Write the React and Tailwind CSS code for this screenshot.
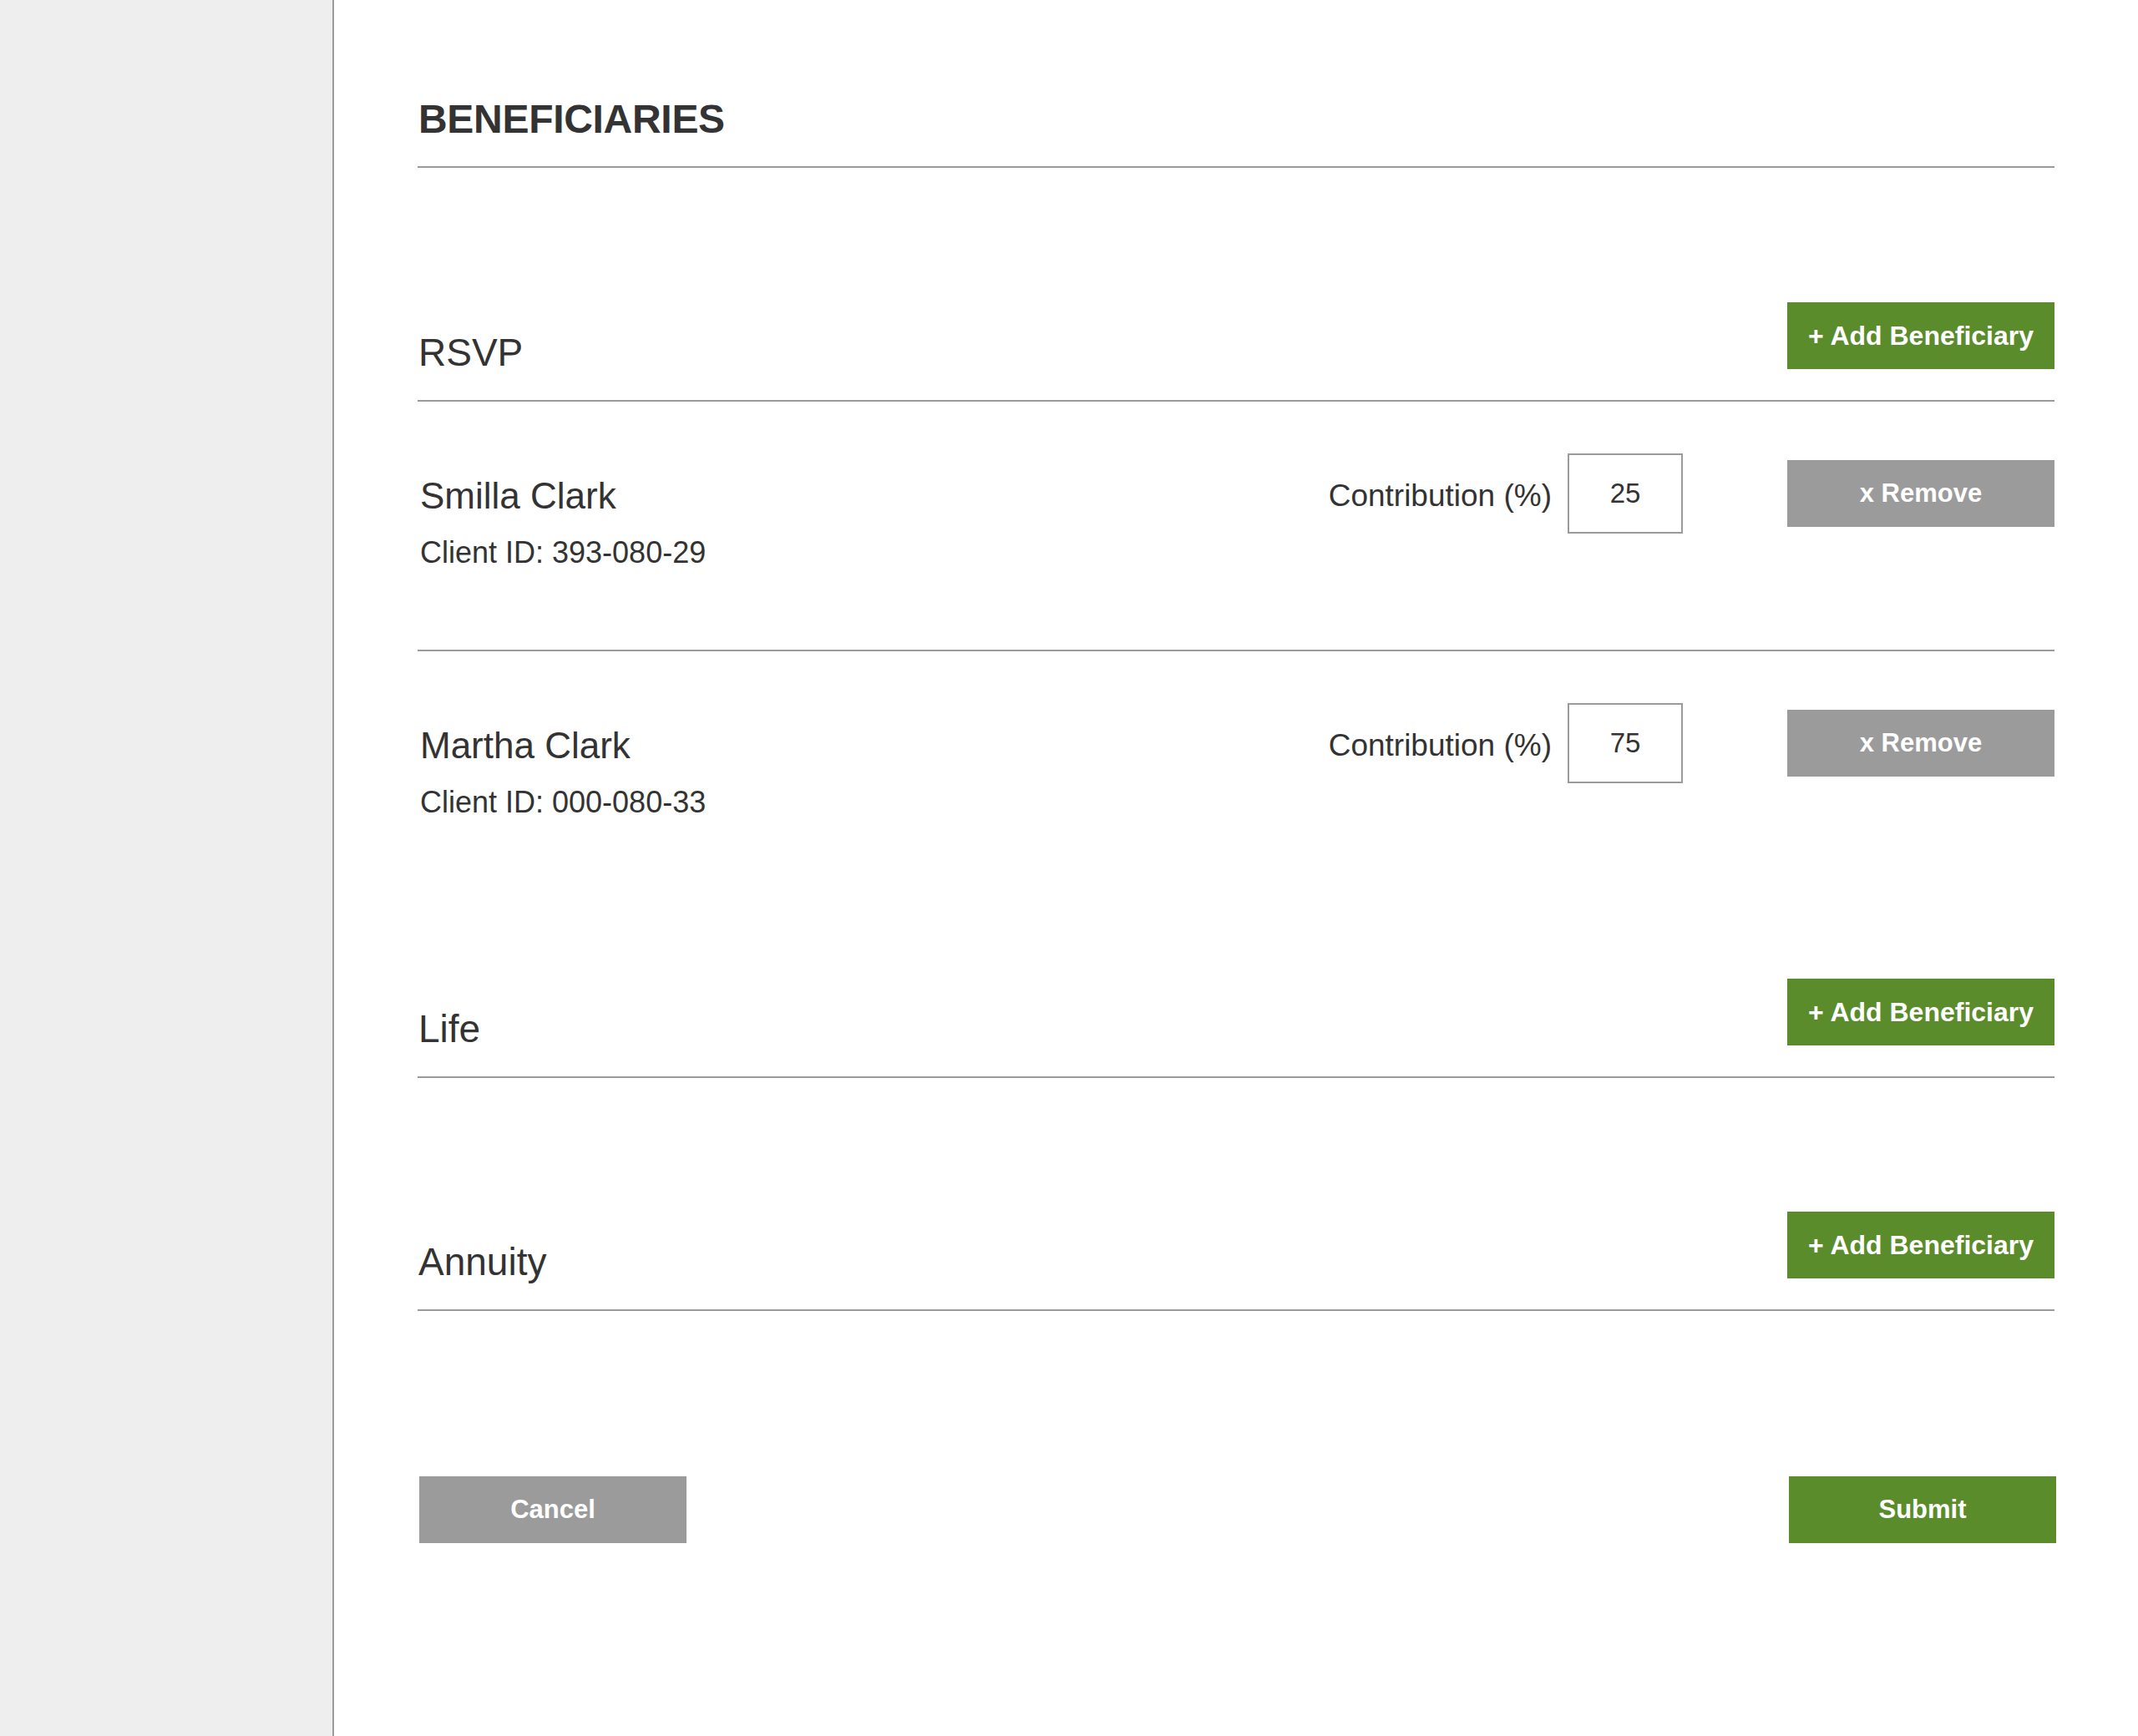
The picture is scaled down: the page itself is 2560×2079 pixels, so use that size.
import React from 'react'

const SECTIONS = [
  {
    name: 'RSVP',
    people: [
      { name: 'Smilla Clark', id: '393-080-29', pct: 25 },
      { name: 'Martha Clark', id: '000-080-33', pct: 75 },
    ],
  },
  { name: 'Life', people: [] },
  { name: 'Annuity', people: [] },
]

function GreenButton({ children, className = '', size = 'text-[31px]' }) {
  return (
    <button className={`w-[320px] h-[80px] bg-[#5a8c2b] text-white font-bold ${size} ${className}`}>
      {children}
    </button>
  )
}

function GrayButton({ children, className = '' }) {
  return (
    <button className={`w-[320px] h-[80px] bg-[#9b9b9b] text-white font-bold text-[31px] ${className}`}>
      {children}
    </button>
  )
}

function Person({ p, last }) {
  return (
    <div className={`h-[299px] flex justify-between items-start ${last ? '' : 'border-b-2 border-[#9b9b9b]'}`}>
      <div className="pt-[91px] pl-[3px]">
        <div className="text-[44px] leading-none">{p.name}</div>
        <div className="text-[36px] leading-none mt-[28px]">Client ID: {p.id}</div>
      </div>
      <div className="pt-[62px] flex items-center">
        <span className="text-[37px] leading-none pt-[5px]">Contribution (%)</span>
        <div className="ml-[19px] w-[138px] h-[96px] border-2 border-[#9b9b9b] flex items-center justify-center text-[33px]">
          {p.pct}
        </div>
        <GrayButton className="ml-[125px]">x Remove</GrayButton>
      </div>
    </div>
  )
}

export default function App() {
  return (
    <div className="flex h-screen text-[#333333]" style={{ fontFamily: '"Liberation Sans", Arial, sans-serif' }}>
      <aside className="w-[400px] shrink-0 bg-[#eeeeee] border-r-2 border-[#9b9b9b]" />
      <main className="flex-1 bg-white pl-[100px]">
        <div className="w-[1960px]">
          <h1 className="mt-[119px] pb-[32px] border-b-2 border-[#9b9b9b] text-[48px] font-bold leading-none pl-[1px] tracking-[-0.3px]">
            BENEFICIARIES
          </h1>

          {SECTIONS.map((s, i) => (
            <section key={s.name} className={i === 0 ? 'mt-[161px]' : i === 1 ? 'mt-[93px]' : 'mt-[160px]'}>
              <div className="flex justify-between items-end pb-[37px] border-b-2 border-[#9b9b9b]">
                <span className="text-[46px] leading-[40px] pl-[1px]">{s.name}</span>
                <GreenButton size="text-[32px]">+ Add Beneficiary</GreenButton>
              </div>
              {s.people.map((p, j) => (
                <Person key={p.id} p={p} last={j === s.people.length - 1} />
              ))}
            </section>
          ))}

          <div className="mt-[198px] flex justify-between pl-[2px]">
            <GrayButton>Cancel</GrayButton>
            <GreenButton className="mr-[-2px]">Submit</GreenButton>
          </div>
        </div>
      </main>
    </div>
  )
}
